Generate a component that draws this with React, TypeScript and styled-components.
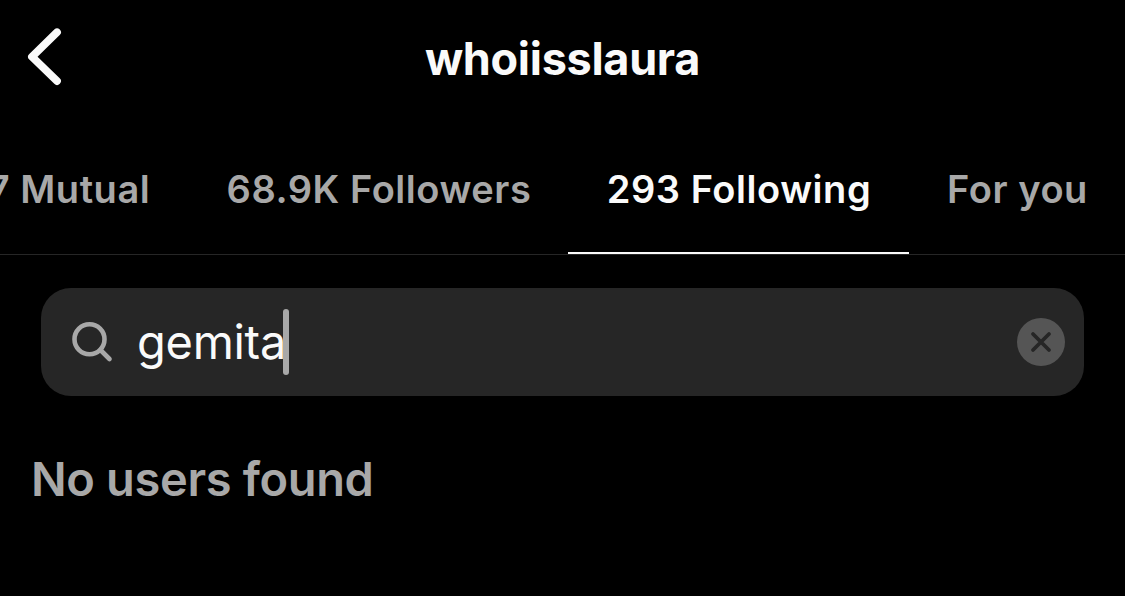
import React from 'react';
import styled, { createGlobalStyle } from 'styled-components';

const colors = {
  background: '#000000',
  field: '#262626',
  divider: '#262626',
  primary: '#fafafa',
  secondary: '#a8a8a8',
  clear: '#555555',
};

const GlobalStyle = createGlobalStyle`
  body {
    margin: 0;
    background: ${colors.background};
    font-family: Inter, 'Liberation Sans', sans-serif;
    overflow: hidden;
  }
`;

const Screen = styled.main`
  display: flex;
  flex-direction: column;
  height: 596px;
  overflow: hidden;
  background: ${colors.background};
`;

const Header = styled.header`
  display: grid;
  grid-template-columns: 90px 1fr 90px;
  align-items: center;
  height: 118px;
`;

const BackButton = styled.button`
  display: flex;
  width: 90px;
  height: 118px;
  padding: 0;
  border: 0;
  background: none;
`;

const Username = styled.h1`
  margin: 0;
  color: ${colors.primary};
  font-size: 45px;
  font-weight: 700;
  line-height: 60px;
  letter-spacing: -0.3px;
  text-align: center;
`;

const Tabs = styled.nav`
  display: flex;
  height: 136px;
  margin-left: -52px;
  border-bottom: 1px solid ${colors.divider};
`;

const Tab = styled.button<{ $width: number; $active?: boolean }>`
  display: flex;
  flex: 0 0 ${({ $width }) => $width}px;
  justify-content: center;
  box-sizing: border-box;
  height: 136px;
  padding: 46px 0 0 1px;
  border: 0;
  border-bottom: 2px solid
    ${({ $active }) => ($active ? colors.primary : 'transparent')};
  background: none;
  color: ${({ $active }) => ($active ? colors.primary : colors.secondary)};
  font-family: inherit;
  font-size: 38px;
  font-weight: 600;
  line-height: 50px;
  letter-spacing: 0.55px;
  white-space: nowrap;
`;

const SearchField = styled.div`
  display: flex;
  align-items: center;
  box-sizing: border-box;
  height: 108px;
  margin: 33px 41px 0;
  padding: 0 19px 0 28px;
  border-radius: 30px;
  background: ${colors.field};
`;

const Query = styled.span`
  margin-left: 22px;
  color: ${colors.primary};
  font-size: 47px;
  line-height: 60px;
  letter-spacing: -0.3px;
`;

const Caret = styled.span`
  width: 6px;
  height: 66px;
  margin-left: -3px;
  border-radius: 3px;
  background: ${colors.secondary};
`;

const ClearButton = styled.button`
  display: flex;
  margin-left: auto;
  padding: 0;
  border: 0;
  background: none;
`;

const EmptyMessage = styled.p`
  margin: 53px 0 0 31px;
  color: ${colors.secondary};
  font-size: 47px;
  font-weight: 600;
  line-height: 60px;
  letter-spacing: -0.35px;
`;

const BackIcon: React.FC = () => (
  <svg width="90" height="118" viewBox="0 0 90 118" fill="none">
    <path
      d="M57 32.3L32 56.7L57 81"
      stroke={colors.primary}
      strokeWidth="7.8"
      strokeLinecap="round"
      strokeLinejoin="round"
    />
  </svg>
);

const SearchIcon: React.FC = () => (
  <svg width="46" height="46" viewBox="0 0 46 46" fill="none">
    <g stroke={colors.secondary} strokeWidth="4.6" strokeLinecap="round">
      <circle cx="20.5" cy="20.2" r="15" />
      <path d="M31.5 31L40.5 40" />
    </g>
  </svg>
);

const ClearIcon: React.FC = () => (
  <svg width="48" height="48" viewBox="0 0 48 48" fill="none">
    <circle cx="24" cy="24" r="24" fill={colors.clear} />
    <path
      d="M16 16L32 32M32 16L16 32"
      stroke={colors.field}
      strokeWidth="3.8"
      strokeLinecap="round"
    />
  </svg>
);

const tabs = [
  { label: '7 Mutual', width: 241 },
  { label: '68.9K Followers', width: 379 },
  { label: '293 Following', width: 341, active: true },
  { label: 'For you', width: 216 },
];

const App: React.FC = (): JSX.Element => {
  return (
    <Screen>
      <GlobalStyle />
      <Header>
        <BackButton aria-label="Back">
          <BackIcon />
        </BackButton>
        <Username>whoiisslaura</Username>
      </Header>
      <Tabs>
        {tabs.map(({ label, width, active }) => (
          <Tab key={label} $width={width} $active={active}>
            {label}
          </Tab>
        ))}
      </Tabs>
      <SearchField>
        <SearchIcon />
        <Query>gemita</Query>
        <Caret />
        <ClearButton aria-label="Clear search">
          <ClearIcon />
        </ClearButton>
      </SearchField>
      <EmptyMessage>No users found</EmptyMessage>
    </Screen>
  );
};

export default App;
